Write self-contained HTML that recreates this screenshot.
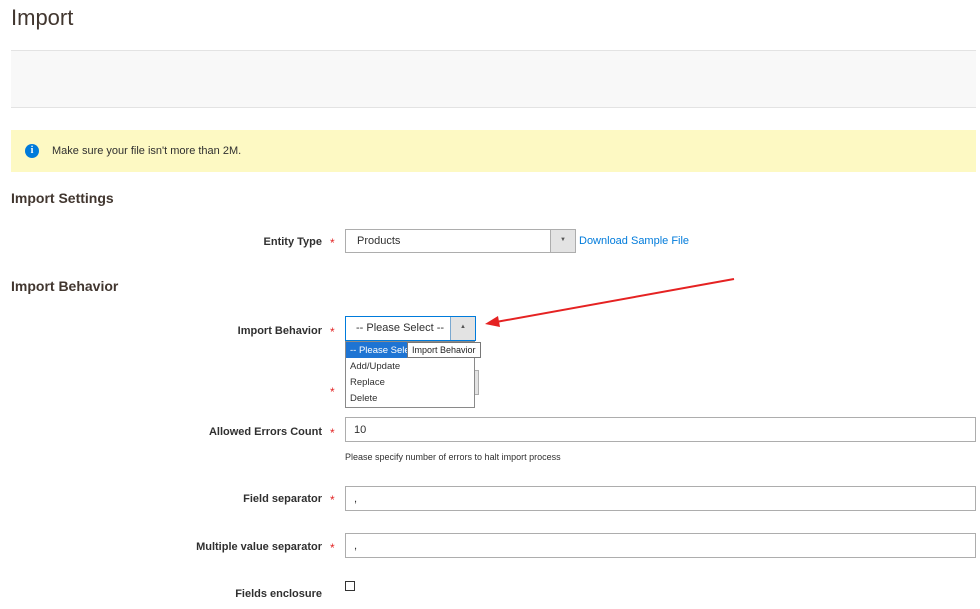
<!DOCTYPE html>
<html><head><meta charset="utf-8"><style>
*{margin:0;padding:0;box-sizing:border-box}
body{width:980px;height:609px;background:#fff;font-family:"Liberation Sans",sans-serif;color:#303030;position:relative;overflow:hidden}
.a{position:absolute;white-space:nowrap}
.lbl{position:absolute;right:658px;font-size:11px;font-weight:bold;color:#303030}
.star{position:absolute;left:330px;color:#e22626;font-size:12px}
.inp{position:absolute;left:345px;width:631px;height:25px;border:1px solid #adadad;font-size:11px;padding:6px 8px;background:#fff}
.sel{position:absolute;border:1px solid #adadad;background:#fff;font-size:11px}
.btn{position:absolute;right:0;top:0;bottom:0;width:25px;background:#e3e3e3;border-left:1px solid #adadad}
</style></head><body>
<div class="a" style="left:11px;top:5px;font-size:22px;color:#41362f">Import</div>
<div class="a" style="left:11px;top:50px;width:965px;height:58px;background:#f8f8f8;border-top:1px solid #e3e3e3;border-bottom:1px solid #e3e3e3"></div>
<div class="a" style="left:11px;top:130px;width:965px;height:42px;background:#fdf9c3"></div>
<div class="a" style="left:25px;top:144px;width:14px;height:14px;border-radius:50%;background:#007bdb;color:#fff;font-size:10px;font-weight:bold;text-align:center;line-height:14px;font-family:'Liberation Serif',serif">i</div>
<div class="a" style="left:52px;top:145px;font-size:11px;color:#303030">Make sure your file isn't more than 2M.</div>
<div class="a" style="left:11px;top:190px;font-size:14px;font-weight:bold;color:#41362f">Import Settings</div>
<div class="lbl" style="top:236px">Entity Type</div><div class="star" style="top:236px">*</div>
<div class="sel" style="left:345px;top:229px;width:231px;height:24px"><span class="a" style="left:11px;top:5px">Products</span><div class="btn"><span class="a" style="left:9px;top:7px;font-size:6px;color:#555">▼</span></div></div>
<div class="a" style="left:579px;top:235px;font-size:11px;color:#007bdb">Download Sample File</div>
<div class="a" style="left:11px;top:278px;font-size:14px;font-weight:bold;color:#41362f">Import Behavior</div>
<div class="lbl" style="top:325px">Import Behavior</div><div class="star" style="top:325px">*</div>
<div class="sel" style="left:345px;top:316px;width:131px;height:25px;border-color:#007bdb"><span class="a" style="left:10px;top:5px;font-size:11px">-- Please Select --</span><div class="btn" style="border-left-color:#7aa8d0;background:#e3e3e3"><span class="a" style="left:9px;top:7px;font-size:6px;color:#555">▲</span></div></div>
<div class="a" style="left:474px;top:370px;width:5px;height:25px;background:#e3e3e3;border:1px solid #adadad"></div>
<div class="star" style="top:385px">*</div>
<div class="a" style="left:345px;top:341px;width:130px;height:67px;border:1px solid #8a8a8a;background:#fff;font-size:9.5px;color:#303030">
<div style="background:#1e74d3;color:#fff;height:16px;padding:3px 4px">-- Please Select --</div>
<div style="padding:3px 4px;height:16px">Add/Update</div>
<div style="padding:3px 4px;height:16px">Replace</div>
<div style="padding:3px 4px;height:16px">Delete</div></div>
<div class="a" style="left:407px;top:342px;width:74px;height:16px;border:1px solid #777;background:#fff;font-size:9px;padding:2px 4px;color:#222">Import Behavior</div>
<div class="lbl" style="top:426px">Allowed Errors Count</div><div class="star" style="top:426px">*</div>
<div class="inp" style="top:417px">10</div>
<div class="a" style="left:345px;top:452px;font-size:9px;color:#303030">Please specify number of errors to halt import process</div>
<div class="lbl" style="top:493px">Field separator</div><div class="star" style="top:493px">*</div>
<div class="inp" style="top:486px">,</div>
<div class="lbl" style="top:541px">Multiple value separator</div><div class="star" style="top:541px">*</div>
<div class="inp" style="top:533px">,</div>
<div class="lbl" style="top:588px">Fields enclosure</div>
<div class="a" style="left:345px;top:581px;width:10px;height:10px;border:1px solid #333;background:#fff"></div>
<svg class="a" style="left:0;top:0" width="980" height="609"><line x1="734" y1="279" x2="496" y2="322" stroke="#e52222" stroke-width="2"/><polygon points="485,324 498,316 500,327" fill="#e52222"/></svg>
</body></html>
